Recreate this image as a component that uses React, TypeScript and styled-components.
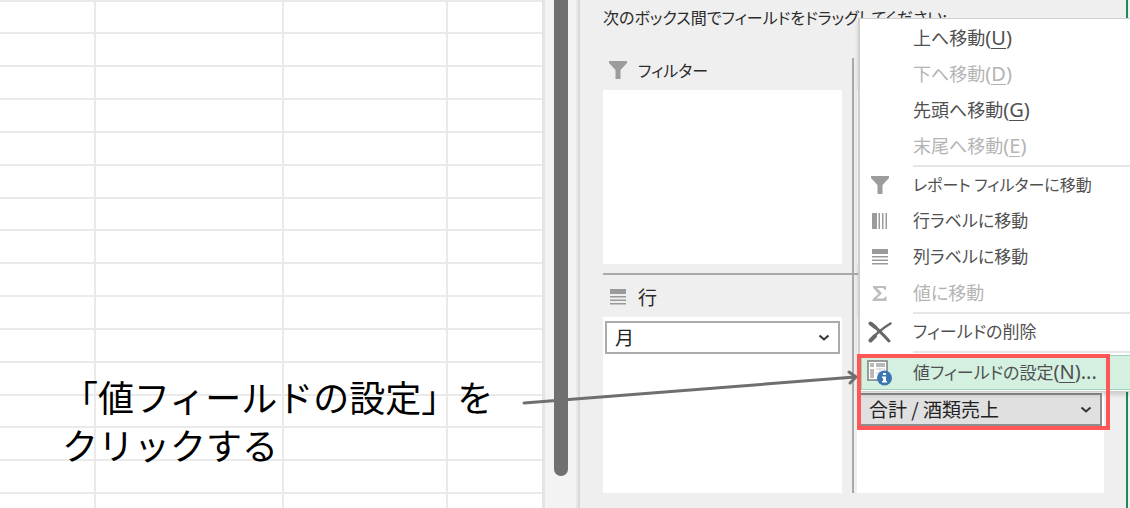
import React from "react";
import styled, { createGlobalStyle, css } from "styled-components";

const GlobalStyle = createGlobalStyle`
  *, *::before, *::after { box-sizing: border-box; }
  body {
    margin: 0;
    background: #ffffff;
    font-family: "Noto Sans CJK JP", sans-serif;
  }
`;

const Screen = styled.main`
  position: relative;
  display: flex;
  min-height: 100vh;
  overflow: hidden;
`;

/* ---------- worksheet ---------- */

const Sheet = styled.section`
  position: relative;
  flex: 1;
  min-width: 0;
  background: #ffffff;
`;

const Grid = styled.table`
  width: 100%;
  table-layout: fixed;
  border-collapse: separate;
  border-spacing: 0;
`;

const GridRow = styled.tr`
  height: 33px;

  &:nth-child(6n + 1) {
    height: 32px;
  }
`;

const GridCell = styled.td`
  padding: 0;
  border-top: 2px solid #eaeaea;
  border-right: 2px solid #eaeaea;

  &:last-child {
    border-right: 0;
  }
`;

const Note = styled.p`
  position: absolute;
  top: 372px;
  left: 62px;
  margin: 0;
  color: #000000;
  font-size: 36px;
  line-height: 48px;
  white-space: nowrap;
`;

/* ---------- scroll bar ---------- */

const ScrollTrack = styled.div`
  flex: none;
  width: 36px;
  padding-left: 9px;
  background: #f3f3f3;
  border-left: 3px solid #e4e4e4;
  border-right: 2px solid #ebe9e8;
`;

const ScrollThumb = styled.div`
  width: 14px;
  height: 476px;
  background: #707070;
  border-radius: 0 0 7px 7px;
`;

/* ---------- field pane ---------- */

const Pane = styled.section`
  position: relative;
  flex: none;
  width: 552px;
  padding: 4px 26px 16px 23px;
  background: #efefef;
  border-left: 2px solid #d9d9d9;
`;

const PaneEdge = styled.div`
  position: absolute;
  top: 0;
  right: 2px;
  bottom: 0;
  width: 2px;
  background: #21875a;
`;

const PaneTitle = styled.h2`
  margin: 0 0 28px;
  color: #2b2b2b;
  font-size: 16px;
  font-weight: 400;
  line-height: 26px;
  font-feature-settings: "palt";
  white-space: nowrap;
`;

const Zones = styled.div`
  display: grid;
  grid-template-columns: 251px 1fr;
`;

const Zone = styled.section<{ $left?: boolean; $lower?: boolean }>`
  padding-top: ${(p) => (p.$lower ? 10 : 0)}px;
  padding-bottom: ${(p) => (p.$lower ? 0 : 9)}px;
  ${(p) =>
    p.$left
      ? css`
          padding-right: 10px;
          border-right: 2px solid #a9a9a9;
        `
      : css`
          padding-left: 3px;
        `}
  ${(p) =>
    !p.$lower &&
    css`
      border-bottom: 2px solid #a9a9a9;
    `}
`;

const ZoneHeader = styled.h3<{ $dense?: boolean }>`
  display: flex;
  align-items: center;
  gap: 11px;
  height: 26px;
  margin: 0 0 6px;
  padding: 0 0 2px 6px;
  color: #2b2b2b;
  font-size: ${(p) => (p.$dense ? 16 : 19)}px;
  font-weight: 400;
  line-height: 24px;
  font-feature-settings: "palt";
`;

const DropBox = styled.div<{ $skip?: number; $tall?: boolean }>`
  height: ${(p) => (p.$tall ? 176 : 174)}px;
  padding: ${(p) => 4 + (p.$skip ?? 0)}px 2px 4px;
  background: #ffffff;
`;

const FieldWrap = styled.label`
  position: relative;
  display: block;

  svg {
    position: absolute;
    top: 12px;
    right: 10px;
    pointer-events: none;
  }
`;

const FieldSelect = styled.select<{ $active?: boolean }>`
  display: block;
  width: 100%;
  height: 33px;
  padding: 0 30px 2px 8px;
  appearance: none;
  color: #222222;
  background: ${(p) => (p.$active ? "#e0e0e0" : "#ffffff")};
  border: 2px solid ${(p) => (p.$active ? "#8e8e8e" : "#ababab")};
  border-radius: 0;
  font-family: inherit;
  font-size: 19px;
`;

/* ---------- context menu ---------- */

const Menu = styled.div`
  position: absolute;
  top: 18px;
  right: 0;
  width: 272px;
  padding: 1px 0 1px 1px;
  background: #ffffff;
  border: 1px solid #cfcfcf;
  border-left-width: 2px;
  border-right: 0;
  box-shadow: 0 3px 4px rgba(0, 0, 0, 0.14);
`;

const MenuItem = styled.button<{ $active?: boolean; $size?: number }>`
  display: flex;
  align-items: center;
  gap: 21px;
  width: 100%;
  height: ${(p) => (p.$active ? 35 : 36)}px;
  margin: ${(p) => (p.$active ? 2 : 0)}px 0 0;
  padding: 0 0 0 5px;
  color: #505050;
  background: ${(p) => (p.$active ? "#d3f0e0" : "transparent")};
  border: solid ${(p) => (p.$active ? "#9fd3b8" : "transparent")};
  border-width: 1px 0 1px 1px;
  font-family: inherit;
  font-size: ${(p) => p.$size ?? 18}px;
  line-height: 26px;
  font-feature-settings: "palt";
  text-align: left;
  white-space: nowrap;

  &:disabled {
    color: #b4b4b4;
  }
`;

const MenuLabel = styled.span`
  padding-bottom: 2px;
`;

const IconSlot = styled.span`
  display: flex;
  flex: none;
  justify-content: center;
  width: 25px;
`;

const Accel = styled.span`
  font-family: "Noto Sans", sans-serif;
  font-size: 20px;

  u {
    display: inline-block;
    border-bottom: 1px solid currentColor;
    line-height: 20px;
    text-decoration: none;
  }
`;

const Separator = styled.hr`
  height: 3px;
  margin: 0 0 0 52px;
  border: solid #e6e6e6;
  border-width: 0 0 2px;
`;

/* ---------- annotations ---------- */

const Highlight = styled.div`
  position: absolute;
  top: 354px;
  right: 20px;
  width: 253px;
  height: 76px;
  border: 4px solid #ff5757;
  pointer-events: none;
`;

const Arrow = styled.svg`
  position: absolute;
  top: 365px;
  right: 271px;
  pointer-events: none;
`;

/* ---------- icons ---------- */

const FunnelIcon = () => (
  <svg width="18" height="18" viewBox="0 0 18 18" fill="#9c9c9c" aria-hidden="true">
    <path d="M0 0H18V2L11.500 9V18H6.500V9L0 2Z" />
  </svg>
);

const RowsIcon = () => (
  <svg width="18" height="16" viewBox="0 0 18 16" fill="#9a9a9a" aria-hidden="true">
    <path d="M1 0H17V5H1ZM1 7H17V8.500H1ZM1 10.500H17V12H1ZM1 14H17V15.500H1Z" />
  </svg>
);

const ColumnsIcon = () => (
  <svg width="16" height="16" viewBox="0 0 16 16" fill="#9a9a9a" aria-hidden="true">
    <path d="M0 0H5V16H0ZM6.500 0H8V16H6.500ZM10 0H11.500V16H10ZM13.500 0H15V16H13.500Z" />
  </svg>
);

const SigmaIcon = () => (
  <svg width="16" height="15" viewBox="0 0 16 15" fill="#bdbdbd" aria-hidden="true">
    <path d="M1 0H14V4H12.800Q12.300 2 10 2H5L10 7.300L4.500 12.500H10.500Q12.800 12.500 13.300 10.500H14.500V15H0.500V13.300L6.500 7.700L1 1.700Z" />
  </svg>
);

const DeleteIcon = () => (
  <svg width="24" height="22" viewBox="0 0 24 22" fill="none" stroke="#6b6765" strokeLinecap="round" aria-hidden="true">
    <path d="M3 2.500Q11 9 21 20" strokeWidth="3" />
    <path d="M2.500 19.500Q10 10 22.500 2.500" strokeWidth="2.500" />
    <path d="M2.500 2.500L7 6M2.500 19.500L7 15" strokeWidth="4" />
  </svg>
);

const SettingsIcon = () => (
  <svg width="25" height="26" viewBox="0 0 25 26" aria-hidden="true">
    <path d="M1 1H20V20H1Z" fill="#ffffff" stroke="#7d7d7d" strokeWidth="1.500" />
    <path d="M3 3H7V7H3ZM9 3H18V7H9ZM3 9H7V18H3Z" fill="#b9b9b9" />
    <path d="M9 9H18M9 13H18M13 9V18" stroke="#c9c9c9" fill="none" />
    <circle cx="17.500" cy="18" r="7.500" fill="#3b76b5" />
    <path d="M16 13H19V15H16ZM15 16.500H19V21H20V22.500H15V21H16V18H15Z" fill="#ffffff" />
  </svg>
);

const Chevron = () => (
  <svg width="12" height="10" viewBox="0 0 12 10" fill="none" stroke="#333333" strokeWidth="2" aria-hidden="true">
    <path d="M1.500 2.500L6 6.500L10.500 2.500" />
  </svg>
);

/* ---------- content ---------- */

const rows = Array.from({ length: 16 }, (_, i) => i);

type Entry = {
  label: string;
  accel?: string;
  tail?: string;
  icon?: React.ReactNode;
  size?: number;
  disabled?: boolean;
  active?: boolean;
};

const groups: Entry[][] = [
  [
    { label: "上へ移動", accel: "U" },
    { label: "下へ移動", accel: "D", disabled: true },
    { label: "先頭へ移動", accel: "G" },
    { label: "末尾へ移動", accel: "E", disabled: true },
  ],
  [
    { label: "レポート フィルターに移動", icon: <FunnelIcon />, size: 16 },
    { label: "行ラベルに移動", icon: <ColumnsIcon />, size: 17 },
    { label: "列ラベルに移動", icon: <RowsIcon />, size: 17 },
    { label: "値に移動", icon: <SigmaIcon />, disabled: true },
  ],
  [{ label: "フィールドの削除", icon: <DeleteIcon />, size: 17 }],
  [{ label: "値フィールドの設定", accel: "N", tail: "...", icon: <SettingsIcon />, size: 17, active: true }],
];

const Field = ({ name, active }: { name: string; active?: boolean }) => (
  <FieldWrap>
    <FieldSelect $active={active} aria-label={name}>
      <option>{name}</option>
    </FieldSelect>
    <Chevron />
  </FieldWrap>
);

export default function App() {
  return (
    <>
      <GlobalStyle />
      <Screen>
        <Sheet>
          <Grid aria-label="ワークシート">
            <colgroup>
              <col style={{ width: 96 }} />
              <col style={{ width: 188 }} />
              <col style={{ width: 164 }} />
              <col />
            </colgroup>
            <tbody>
              {rows.map((r) => (
                <GridRow key={r}>
                  <GridCell />
                  <GridCell />
                  <GridCell />
                  <GridCell />
                </GridRow>
              ))}
            </tbody>
          </Grid>
          <Note>
            「値フィールドの設定」を
            <br />
            クリックする
          </Note>
        </Sheet>

        <ScrollTrack>
          <ScrollThumb />
        </ScrollTrack>

        <Pane>
          <PaneEdge />
          <PaneTitle>次のボックス間でフィールドをドラッグしてください:</PaneTitle>
          <Zones>
            <Zone $left>
              <ZoneHeader $dense>
                <FunnelIcon />
                フィルター
              </ZoneHeader>
              <DropBox />
            </Zone>
            <Zone>
              <ZoneHeader />
              <DropBox />
            </Zone>
            <Zone $left $lower>
              <ZoneHeader>
                <RowsIcon />行
              </ZoneHeader>
              <DropBox $tall>
                <Field name="月" />
              </DropBox>
            </Zone>
            <Zone $lower>
              <ZoneHeader />
              <DropBox $tall $skip={72}>
                <Field name="合計 / 酒類売上" active />
              </DropBox>
            </Zone>
          </Zones>

          <Menu role="menu">
            {groups.map((group, g) => (
              <React.Fragment key={g}>
                {g > 0 && <Separator />}
                {group.map((item) => (
                  <MenuItem
                    key={item.label}
                    type="button"
                    role="menuitem"
                    disabled={item.disabled}
                    $active={item.active}
                    $size={item.size}
                  >
                    <IconSlot>{item.icon}</IconSlot>
                    <MenuLabel>
                      {item.label}
                      {item.accel && (
                        <Accel>
                          (<u>{item.accel}</u>){item.tail}
                        </Accel>
                      )}
                    </MenuLabel>
                  </MenuItem>
                ))}
              </React.Fragment>
            ))}
          </Menu>
        </Pane>

        <Highlight />
        <Arrow width="340" height="44" viewBox="0 0 340 44" fill="none" stroke="#6f6f6f" strokeWidth="3" strokeLinecap="round" strokeLinejoin="round" aria-hidden="true">
          <path d="M5 38L336 12" />
          <path d="M330 7L337 12L331 18" />
        </Arrow>
      </Screen>
    </>
  );
}
